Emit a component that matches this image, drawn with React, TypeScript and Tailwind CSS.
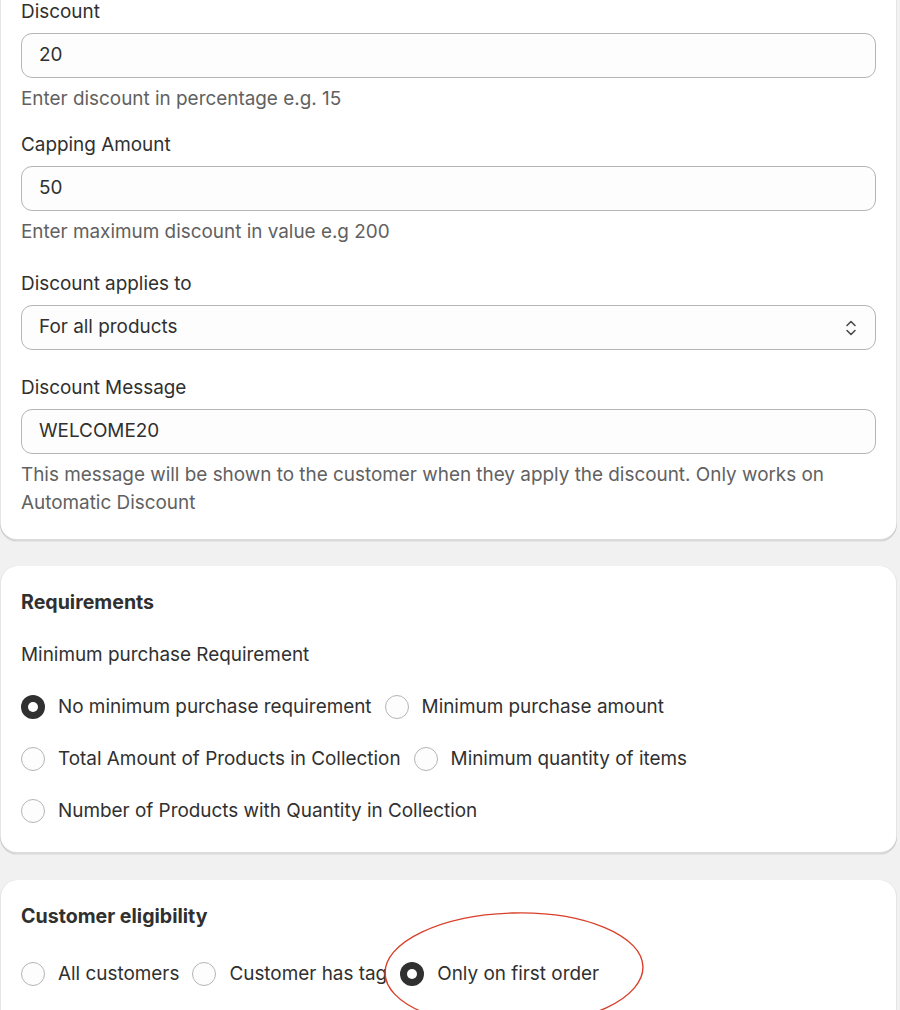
import React from "react";

const cardShadow =
  "shadow-[inset_1px_0_0_0_rgba(0,0,0,0.10),inset_-1px_0_0_0_rgba(0,0,0,0.10),inset_0_-2px_0_0_rgba(0,0,0,0.14),0_1px_0_0_rgba(26,26,26,0.06)]";

const Radio = ({ checked, label }: { checked?: boolean; label: string }) => (
  <label className="flex items-center gap-[13px] h-[32px]">
    {checked ? (
      <span className="w-[24px] h-[24px] rounded-full bg-[#303030] flex items-center justify-center shrink-0">
        <span className="w-[10px] h-[10px] rounded-full bg-white" />
      </span>
    ) : (
      <span className="w-[24px] h-[24px] rounded-full border border-[#b5b5b5] bg-[#fdfdfd] shrink-0" />
    )}
    <span className="text-[18.9px] leading-[28px] text-[#303030]">{label}</span>
  </label>
);

const Field = ({
  label,
  value,
  help,
  select,
}: {
  label: string;
  value: string;
  help?: React.ReactNode;
  select?: boolean;
}) => (
  <div className="flex flex-col">
    <span className="text-[18.9px] leading-[28px] text-[#303030]">{label}</span>
    <div className="mt-[7px] h-[45px] rounded-[11px] border border-[#b5b5b5] bg-[#fdfdfd] flex items-center justify-between pl-[17px] pr-[17px]">
      <span className="text-[18.9px] text-[#303030]">{value}</span>
      {select && (
        <svg width="14" height="20" viewBox="0 0 14 20" fill="none" stroke="#4a4a4a" strokeWidth="1.6" strokeLinecap="round" strokeLinejoin="round">
          <path d="M3 7.5 L7 3.5 L11 7.5" />
          <path d="M3 12.5 L7 16.5 L11 12.5" />
        </svg>
      )}
    </div>
    {help && <p className="mt-[7px] text-[18.9px] leading-[28px] text-[#616161]">{help}</p>}
  </div>
);

export default function App() {
  return (
    <div className="relative min-h-screen bg-[#f1f1f1] pr-[3px] font-['Inter',_'Noto_Sans',_sans-serif] overflow-hidden">
      {/* Discount card (top cut off) */}
      <div className={`-mt-[2px] bg-white rounded-b-[17px] px-[21px] pb-[24px] flex flex-col ${cardShadow}`}>
        <Field label="Discount" value="20" help="Enter discount in percentage e.g. 15" />
        <div className="mt-[18px]">
          <Field label="Capping Amount" value="50" help="Enter maximum discount in value e.g 200" />
        </div>
        <div className="mt-[24px]">
          <Field label="Discount applies to" value="For all products" select />
        </div>
        <div className="mt-[24px]">
          <Field
            label="Discount Message"
            value="WELCOME20"
            help="This message will be shown to the customer when they apply the discount. Only works on Automatic Discount"
          />
        </div>
      </div>

      {/* Requirements */}
      <div className={`mt-[25px] bg-white rounded-[17px] px-[21px] pt-[22px] pb-[27px] ${cardShadow}`}>
        <h2 className="text-[19.6px] leading-[28px] font-bold text-[#303030]">Requirements</h2>
        <p className="mt-[25px] text-[18.9px] leading-[28px] text-[#303030]">Minimum purchase Requirement</p>
        <div className="mt-[22px] flex flex-wrap gap-x-[13px] gap-y-[20px]">
          <Radio checked label="No minimum purchase requirement" />
          <Radio label="Minimum purchase amount" />
          <Radio label="Total Amount of Products in Collection" />
          <Radio label="Minimum quantity of items" />
          <Radio label="Number of Products with Quantity in Collection" />
        </div>
      </div>

      {/* Customer eligibility */}
      <div className={`mt-[26px] bg-white rounded-t-[17px] px-[21px] pt-[22px] pb-[40px] ${cardShadow}`}>
        <h2 className="text-[19.6px] leading-[28px] font-bold text-[#303030]">Customer eligibility</h2>
        <div className="mt-[28px] flex flex-wrap gap-x-[13px]">
          <Radio label="All customers" />
          <Radio label="Customer has tag" />
          <Radio checked label="Only on first order" />
        </div>
      </div>

      {/* hand-drawn annotation */}
      <svg
        className="absolute left-[376px] top-[906px] pointer-events-none"
        width="276"
        height="130"
        viewBox="0 0 276 130"
        fill="none"
      >
        <ellipse cx="138" cy="64" rx="129" ry="57" stroke="#d8402a" strokeWidth="1.4" transform="rotate(-1.5 138 64)" />
      </svg>
    </div>
  );
}
